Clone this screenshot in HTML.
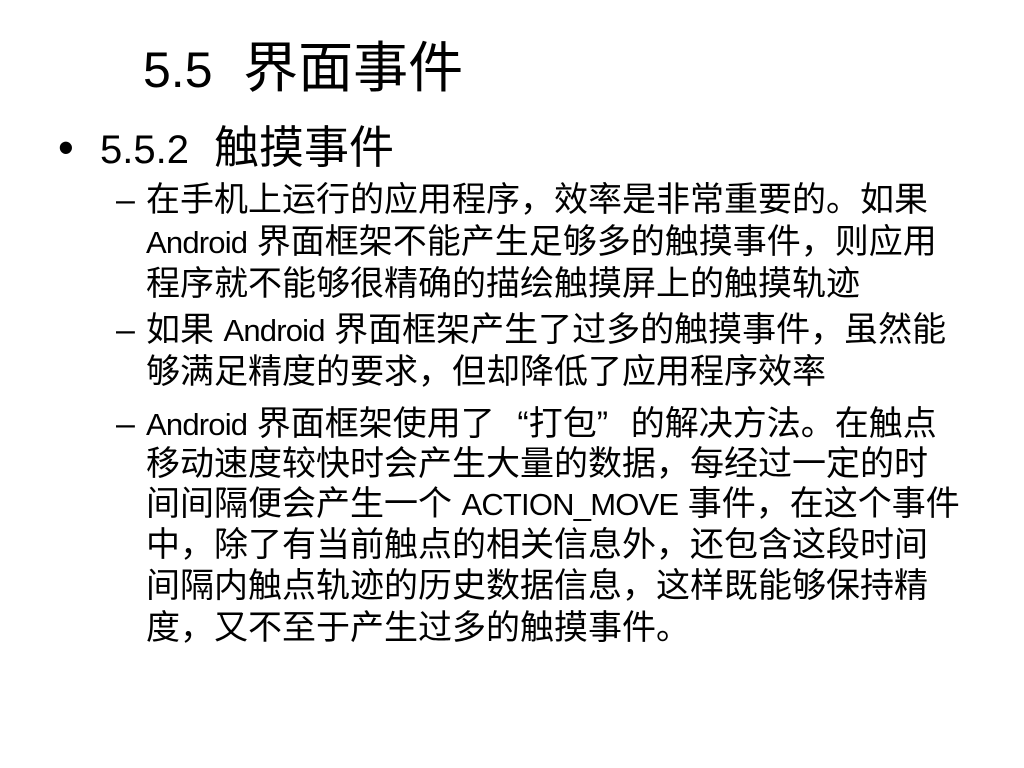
<!DOCTYPE html>
<html><head><meta charset="utf-8"><style>
body{margin:0;width:1024px;height:768px;background:#fff;overflow:hidden;position:relative;font-family:"Liberation Sans","Noto Sans CJK SC",sans-serif;color:#000}
.l{position:absolute;white-space:nowrap;line-height:40px}
.t{font-size:55px;line-height:60px}
.h{font-size:45px;line-height:50px}
.s{font-size:34px;left:146px}
.s i{font-style:normal;font-size:31px;letter-spacing:-0.8px}
.s b{font-weight:normal;display:inline-block;width:34px}
.s b.o{text-align:right}
.d{position:absolute;font-size:34px;left:116px;line-height:40px}
</style></head><body>
<div class="l t" style="left:143px;top:38px"><span style="font-size:50px">5.5</span>&nbsp; 界面事件</div>
<div class="l h" style="left:58px;top:123px">•</div>
<div class="l h" style="left:100px;top:123px"><span style="font-size:40px">5.5.2</span>&nbsp; 触摸事件</div>
<div class="d" style="top:180px">–</div>
<div class="l s" style="top:180px">在手机上运行的应用程序，效率是非常重要的。如果</div>
<div class="l s" style="top:222px"><i>Android</i> 界面框架不能产生足够多的触摸事件，则应用</div>
<div class="l s" style="top:264px">程序就不能够很精确的描绘触摸屏上的触摸轨迹</div>
<div class="d" style="top:310px">–</div>
<div class="l s" style="top:310px">如果 <i>Android</i> 界面框架产生了过多的触摸事件，虽然能</div>
<div class="l s" style="top:352px">够满足精度的要求，但却降低了应用程序效率</div>
<div class="d" style="top:404px">–</div>
<div class="l s" style="top:404px"><i>Android</i> 界面框架使用了<b class="o">“</b>打包<b>”</b>的解决方法。在触点</div>
<div class="l s" style="top:444px">移动速度较快时会产生大量的数据，每经过一定的时</div>
<div class="l s" style="top:484px">间间隔便会产生一个 <i>ACTION_MOVE</i> 事件，在这个事件</div>
<div class="l s" style="top:525px">中，除了有当前触点的相关信息外，还包含这段时间</div>
<div class="l s" style="top:566px">间隔内触点轨迹的历史数据信息，这样既能够保持精</div>
<div class="l s" style="top:608px">度，又不至于产生过多的触摸事件。</div>
</body></html>
